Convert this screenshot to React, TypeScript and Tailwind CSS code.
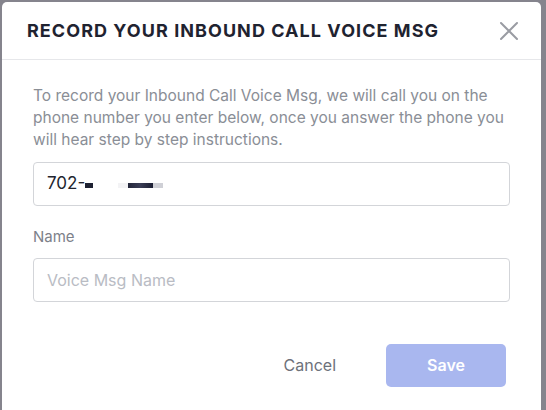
import React from "react";

export default function App() {
  return (
    <div
      className="w-[546px] h-[410px] overflow-hidden bg-[#85848d] pt-[2px] pl-[2px] pr-[5px]"
      style={{ fontFamily: "Inter, 'Noto Sans', sans-serif" }}
    >
      <div className="h-[420px] bg-white rounded-t-[5px] flex flex-col">
        <div className="h-[58px] flex items-center justify-between pl-[25px] pr-[20px] border-b border-[#e6e7ea]">
          <h1 className="text-[18px] font-bold text-[#1f2330] tracking-[1.05px]">
            RECORD YOUR INBOUND CALL VOICE MSG
          </h1>
          <svg width="20" height="20" viewBox="0 0 20 20" className="mr-[2px]">
            <path d="M2 2 L18 18 M18 2 L2 18" stroke="#9a9ca3" strokeWidth="2" strokeLinecap="round" />
          </svg>
        </div>
        <div className="px-[31px] pt-[25px]">
          <p className="text-[15.5px] leading-[22px] text-[#8a8e96]">
            To record your Inbound Call Voice Msg, we will call you on the phone number you enter below, once you answer the phone you will hear step by step instructions.
          </p>
          <div className="mt-[11px] h-[44px] border border-[#d3d5d9] rounded-[4px] flex items-center pl-[13px] text-[17px] text-[#22252e]">
            <span>702-</span>
            <span className="mt-[2px] w-[8px] h-[5px] bg-[#1e2233]" />
            <span className="ml-[25px] mt-[2px] w-[10px] h-[5px] bg-[#f3f3f5]" />
            <span className="mt-[2px] w-[25px] h-[5px] bg-gradient-to-r from-[#23263a] via-[#3a3d55] to-[#1c1f33]" />
            <span className="mt-[2px] w-[10px] h-[5px] bg-[#cfd0d6]" />
          </div>
          <div className="mt-[20px] text-[15px] text-[#7d818a]">Name</div>
          <div className="mt-[9px] h-[44px] border border-[#d3d5d9] rounded-[4px] flex items-center pl-[13px] text-[16px] text-[#b9bcc4]">
            Voice Msg Name
          </div>
          <div className="mt-[42px] flex items-center justify-end pr-[4px]">
            <span className="text-[16px] text-[#6d717a] mr-[50px]">Cancel</span>
            <div className="w-[120px] h-[43px] rounded-[5px] bg-[#a9b7ef] flex items-center justify-center text-white text-[16px] font-semibold">
              Save
            </div>
          </div>
        </div>
      </div>
    </div>
  );
}
